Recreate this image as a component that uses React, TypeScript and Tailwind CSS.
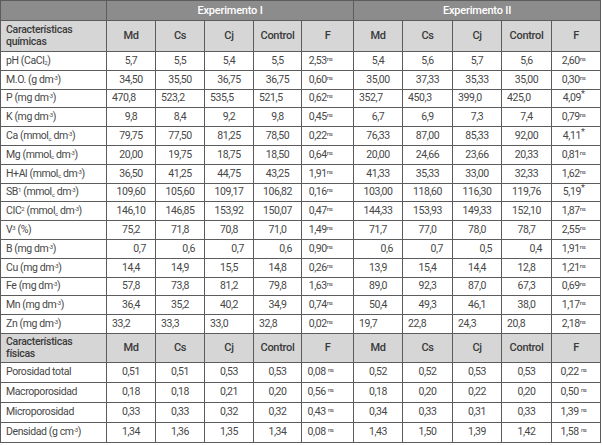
import type { ReactNode } from 'react'

type Row = {
  label: ReactNode
  a: string[]
  fa: string
  b: string[]
  fb: string
  align?: 'left' | 'right'
}

const dm3 = <sup className="text-[6px]">-3</sup>
const mmolc = (
  <>
    mmol<sub className="text-[6px]">c</sub> dm{dm3}
  </>
)

const chem: Row[] = [
  { label: <>pH (CaCl<sub className="text-[6px]">2</sub>)</>, a: ['5,7', '5,5', '5,4', '5,5'], fa: '2,53ns', b: ['5,4', '5,6', '5,7', '5,6'], fb: '2,60ns' },
  { label: <>M.O. (g dm{dm3})</>, a: ['34,50', '35,50', '36,75', '36,75'], fa: '0,60ns', b: ['35,00', '37,33', '35,33', '35,00'], fb: '0,30ns' },
  { label: <>P (mg dm{dm3})</>, a: ['470,8', '523,2', '535,5', '521,5'], fa: '0,62ns', b: ['352,7', '450,3', '399,0', '425,0'], fb: '4,09*', align: 'left' },
  { label: <>K (mg dm{dm3})</>, a: ['9,8', '8,4', '9,2', '9,8'], fa: '0,45ns', b: ['6,7', '6,9', '7,3', '7,4'], fb: '0,79ns' },
  { label: <>Ca ({mmolc})</>, a: ['79,75', '77,50', '81,25', '78,50'], fa: '0,22ns', b: ['76,33', '87,00', '85,33', '92,00'], fb: '4,11*' },
  { label: <>Mg ({mmolc})</>, a: ['20,00', '19,75', '18,75', '18,50'], fa: '0,64ns', b: ['20,00', '24,66', '23,66', '20,33'], fb: '0,81ns' },
  { label: <>H+Al ({mmolc})</>, a: ['36,50', '41,25', '44,75', '43,25'], fa: '1,91ns', b: ['41,33', '35,33', '33,00', '32,33'], fb: '1,62ns' },
  { label: <>SB<sup className="text-[6px]">1</sup> ({mmolc})</>, a: ['109,60', '105,60', '109,17', '106,82'], fa: '0,16ns', b: ['103,00', '118,60', '116,30', '119,76'], fb: '5,19*' },
  { label: <>CIC<sup className="text-[6px]">2</sup> ({mmolc})</>, a: ['146,10', '146,85', '153,92', '150,07'], fa: '0,47ns', b: ['144,33', '153,93', '149,33', '152,10'], fb: '1,87ns' },
  { label: <>V<sup className="text-[6px]">3</sup> (%)</>, a: ['75,2', '71,8', '70,8', '71,0'], fa: '1,49ns', b: ['71,7', '77,0', '78,0', '78,7'], fb: '2,55ns' },
  { label: <>B (mg dm{dm3})</>, a: ['0,7', '0,6', '0,7', '0,6'], fa: '0,90ns', b: ['0,6', '0,7', '0,5', '0,4'], fb: '1,91ns', align: 'right' },
  { label: <>Cu (mg dm{dm3})</>, a: ['14,4', '14,9', '15,5', '14,8'], fa: '0,26ns', b: ['13,9', '15,4', '14,4', '12,8'], fb: '1,21ns' },
  { label: <>Fe (mg dm{dm3})</>, a: ['57,8', '73,8', '81,2', '79,8'], fa: '1,63ns', b: ['89,0', '92,3', '87,0', '67,3'], fb: '0,69ns' },
  { label: <>Mn (mg dm{dm3})</>, a: ['36,4', '35,2', '40,2', '34,9'], fa: '0,74ns', b: ['50,4', '49,3', '46,1', '38,0'], fb: '1,17ns' },
  { label: <>Zn (mg dm{dm3})</>, a: ['33,2', '33,3', '33,0', '32,8'], fa: '0,02ns', b: ['19,7', '22,8', '24,3', '20,8'], fb: '2,18ns', align: 'left' },
]

const phys: Row[] = [
  { label: 'Porosidad total', a: ['0,51', '0,51', '0,53', '0,53'], fa: '0,08 ns', b: ['0,52', '0,52', '0,53', '0,53'], fb: '0,22 ns' },
  { label: 'Macroporosidad', a: ['0,18', '0,18', '0,21', '0,20'], fa: '0,56 ns', b: ['0,18', '0,20', '0,22', '0,20'], fb: '0,50 ns' },
  { label: 'Microporosidad', a: ['0,33', '0,33', '0,32', '0,32'], fa: '0,43 ns', b: ['0,34', '0,33', '0,31', '0,33'], fb: '1,39 ns' },
  { label: <>Densidad (g cm{dm3})</>, a: ['1,34', '1,36', '1,35', '1,34'], fa: '0,08 ns', b: ['1,43', '1,50', '1,39', '1,42'], fb: '1,58 ns' },
]

function FValue({ v }: { v: string }) {
  const m = v.match(/^([\d,]+)(\s?)(ns|\*)$/)
  if (!m) return <>{v}</>
  return (
    <>
      {m[1]}
      {m[2]}
      <sup className={m[3] === '*' ? 'text-[9px]' : 'text-[6px]'}>{m[3]}</sup>
    </>
  )
}

const cell = 'border border-[#5c5c5c] p-0'

function valueClass(align?: 'left' | 'right') {
  if (align === 'left') return `${cell} text-left pl-[5px]`
  if (align === 'right') return `${cell} text-right pr-[9px]`
  return `${cell} text-center`
}

function SubHeader({ title, height }: { title: string; height: string }) {
  return (
    <tr className={`${height} bg-[#d6d6d6] text-[#3a3a3a] font-['Roboto',sans-serif] font-medium tracking-[-0.3px]`}>
      <th className={`${cell} text-left font-medium pl-[5px] pr-[24px] leading-[12px]`}>{title}</th>
      {['Md', 'Cs', 'Cj', 'Control', 'F', 'Md', 'Cs', 'Cj', 'Control', 'F'].map((h, i) => (
        <th key={i} className={`${cell} text-center font-medium text-[11px]`}>
          {h}
        </th>
      ))}
    </tr>
  )
}

function DataRow({ row, height }: { row: Row; height: string }) {
  return (
    <tr className={height}>
      <td className={`${cell} text-left pl-[5px] whitespace-nowrap`}>{row.label}</td>
      {row.a.map((v, i) => (
        <td key={`a${i}`} className={valueClass(row.align)}>
          {v}
        </td>
      ))}
      <td className={`${cell} text-center pr-[14px]`}>
        <FValue v={row.fa} />
      </td>
      {row.b.map((v, i) => (
        <td key={`b${i}`} className={valueClass(row.align)}>
          {v}
        </td>
      ))}
      <td className={`${cell} text-center pr-[5px]`}>
        <FValue v={row.fb} />
      </td>
    </tr>
  )
}

export default function App() {
  return (
    <div className="w-[602px] h-[445px] bg-white overflow-hidden">
      <table className="table-fixed border-collapse w-[601px] text-[10.5px] leading-[12px] tracking-[-0.4px] text-[#474747] font-['Roboto',sans-serif]">
        <colgroup>
          <col className="w-[106px]" />
          <col className="w-[49px]" />
          <col className="w-[49px]" />
          <col className="w-[49px]" />
          <col className="w-[48px]" />
          <col className="w-[52px]" />
          <col className="w-[49px]" />
          <col className="w-[50px]" />
          <col className="w-[49px]" />
          <col className="w-[50px]" />
          <col className="w-[49px]" />
        </colgroup>
        <tbody>
          <tr className="h-[20px] bg-[#8c8c8c] text-white">
            <th className={cell} />
            <th colSpan={5} className={`${cell} font-medium text-center text-[11px] tracking-[-0.2px]`}>
              Experimento I
            </th>
            <th colSpan={5} className={`${cell} font-medium text-center text-[11px] tracking-[-0.2px]`}>
              Experimento II
            </th>
          </tr>
          <SubHeader title="Características químicas" height="h-[31px]" />
          {chem.map((r, i) => (
            <DataRow key={i} row={r} height="h-[18.8px]" />
          ))}
          <SubHeader title="Características físicas" height="h-[29px]" />
          {phys.map((r, i) => (
            <DataRow key={i} row={r} height="h-[20px]" />
          ))}
        </tbody>
      </table>
    </div>
  )
}
